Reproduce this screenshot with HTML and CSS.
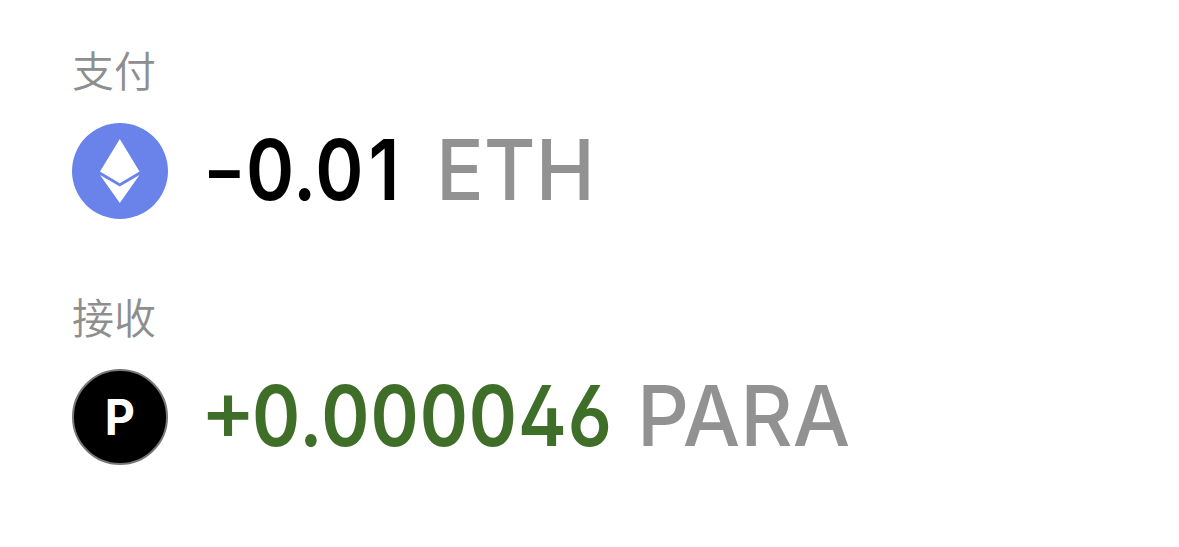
FILE: index.html
```html
<!DOCTYPE html>
<html lang="zh-CN">
<head>
<meta charset="utf-8">
<title>支付与接收</title>
<link rel="stylesheet" href="styles.css">
</head>
<body>
<main class="transfers">
  <section class="transfer">
    <h2 class="label">支付</h2>
    <div class="row">
      <svg class="token" viewBox="0 0 96 96" aria-hidden="true">
        <circle cx="48" cy="48" r="48" fill="#6983eb"/>
        <path d="M47.8 16 67.5 48.5 47.8 60.2 28 48.5Z" fill="#fff"/>
        <path d="M28 52 47.8 63.4 67.5 52 47.8 80Z" fill="#fff"/>
      </svg>
      <p class="amount pay"><span class="sign">–</span><span class="value">0.0<span class="one">1</span></span><span class="unit">ETH</span></p>
    </div>
  </section>
  <section class="transfer">
    <h2 class="label">接收</h2>
    <div class="row">
      <div class="token para"><span class="glyph">P</span></div>
      <p class="amount receive"><span class="sign">+</span><span class="value">0.000046</span><span class="unit">PARA</span></p>
    </div>
  </section>
</main>
</body>
</html>
```
FILE: styles.css
```css
body { margin: 0; background: #fff; }
.transfers { padding: 45px 72px; display: flex; flex-direction: column; gap: 75px; }
.transfer { height: 172px; }
.label { margin: 0 0 29px; height: 48px; font: 350 42px/48px "Noto Sans CJK SC", sans-serif; color: #8e8e8e; }
.row { display: flex; align-items: center; height: 96px; }
.token { width: 96px; height: 96px; flex: none; }
.transfer:first-child .label { margin-bottom: 30px; }
.para { box-sizing: border-box; border: 2px solid #777; border-radius: 50%; background: #000; color: #fff; font: 700 49px/94px Inter, sans-serif; text-align: center; }
.glyph { display: inline-block; transform: scaleX(.95); }
.amount { margin: 0 0 2px 40px; display: flex; font: 500 84px/96px Inter, sans-serif; white-space: nowrap; }
.sign, .value, .unit { display: block; transform-origin: left center; }
.value { font-weight: 560; font-feature-settings: "cv02", "cv03"; transform: scaleX(.87); letter-spacing: 1px; }
.one { margin-left: 5px; }
.pay .sign { width: 36.5px; transform: scaleX(.73); margin-left: 1px; }
.pay .value { width: 189.5px; }
.receive { color: #3f6e28; }
.receive .sign { width: 52px; margin-left: -8px; font-weight: 480; font-feature-settings: "case"; }
.receive .value { width: 385px; letter-spacing: 1.1px; }
.unit { color: #929292; font-weight: 460; transform: scaleX(.965); }
.pay .unit { transform: scaleX(.945); margin-left: 1px; }
```
